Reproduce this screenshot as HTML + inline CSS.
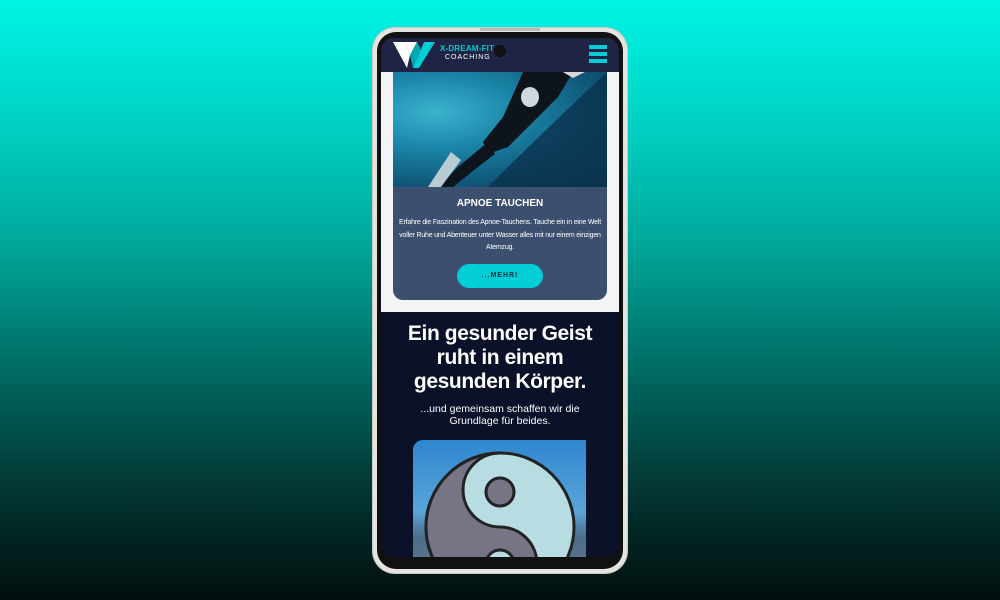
<!DOCTYPE html>
<html><head><meta charset="utf-8"><style>
*{margin:0;padding:0;box-sizing:border-box}
body{width:1000px;height:600px;overflow:hidden;background:linear-gradient(180deg,#00f4e6 0%,#00d6c8 18%,#00a99c 40%,#006a62 62%,#033a36 80%,#010e0d 100%);font-family:"Liberation Sans",sans-serif;position:relative}
.abs{position:absolute}
.frame{left:373px;top:28px;width:254px;height:545px;border-radius:22px;background:#e4e4e0;box-shadow:0 0 0 1px #c9c9c4}
.bezel{left:377px;top:32px;width:246px;height:537px;border-radius:19px;background:#111}
.screen{left:381px;top:38px;width:238px;height:519px;border-radius:12px;overflow:hidden;background:#0b1129}
.hdr{left:0;top:0;width:238px;height:34px;background:#1f2444}
.white{left:0;top:34px;width:238px;height:240px;background:#f3f4f6}
.img{left:12px;top:34px;width:214px;height:115px;overflow:hidden;background:radial-gradient(ellipse at 20% 35%,#3bb3cf 0%,#1a84a6 35%,#0f5577 70%,#0b3a55 100%)}
.body{left:12px;top:149px;width:214px;height:113px;background:#3c4f6e;border-radius:0 0 10px 10px;color:#fff;text-align:center}
.btn{left:64px;top:77px;width:86px;height:24px;border-radius:12px;background:#00cdd4;color:#1f2a44;font-size:7px;font-weight:bold;letter-spacing:1px;line-height:24px}
h1{font-size:21px;line-height:24px;color:#fff;text-align:center;font-weight:bold;letter-spacing:-0.4px}
</style></head><body>
<div class="abs frame"></div>
<div class="abs" style="left:480px;top:28px;width:60px;height:3px;background:#bbb"></div>
<div class="abs bezel"></div>
<div class="abs screen">
 <div class="abs hdr">
  <svg class="abs" style="left:12px;top:3px" width="44" height="28" viewBox="0 0 44 28">
   <polygon points="0,1 12,1 17,14 14,27" fill="#fff"/>
   <polygon points="12,1 24,1 17,14" fill="#fff"/>
   <polygon points="20,27 31,1 42,1 26,27" fill="#00cdd4"/>
   <polygon points="17,14 24,1 28,9 20,27" fill="#00a9b0"/>
  </svg>
  <div class="abs" style="left:59px;top:6px;font-size:8px;font-weight:bold;color:#00cdd4;letter-spacing:0.2px">X-DREAM-FIT</div>
  <div class="abs" style="left:64px;top:16px;font-size:7px;color:#fff;letter-spacing:1px">COACHING</div>
  <div class="abs" style="left:113px;top:7px;width:12px;height:12px;border-radius:6px;background:#111"></div>
  <div class="abs" style="left:208px;top:7px;width:18px;height:4px;background:#00cdd4"></div>
  <div class="abs" style="left:208px;top:14px;width:18px;height:4px;background:#00cdd4"></div>
  <div class="abs" style="left:208px;top:21px;width:18px;height:4px;background:#00cdd4"></div>
 </div>
 <div class="abs white"></div>
 <div class="abs img">
  <svg width="214" height="115" viewBox="0 0 214 115">
   <path d="M214 0 L214 115 L95 115 Q150 60 214 0Z" fill="#0b2f4a" opacity="0.75"/>
   <path d="M130 0 L180 0 L165 25 L140 50 L115 75 L95 82 L90 70 L110 45 Z" fill="#0e141c"/>
   <ellipse cx="137" cy="25" rx="9" ry="10" fill="#cfd8dc"/>
   <path d="M95 70 L65 95 L45 115 L60 115 L85 95 L102 82Z" fill="#0e141c"/>
   <path d="M58 80 L35 115 L48 115 L68 88Z" fill="#b8ccd4"/>
   <path d="M170 0 L192 0 L180 6Z" fill="#d8d8d8"/>
  </svg>
 </div>
 <div class="abs body">
  <div style="margin-top:11px;font-size:10px;font-weight:bold">APNOE TAUCHEN</div>
  <div style="margin-top:8px;font-size:7px;line-height:12.5px;padding:0 4px;letter-spacing:-0.2px">Erfahre die Faszination des Apnoe-Tauchens. Tauche ein in eine Welt voller Ruhe und Abenteuer unter Wasser alles mit nur einem einzigen Atemzug.</div>
  <div class="abs btn">...MEHR!</div>
 </div>
 <div class="abs" style="left:0;top:284px;width:238px"><h1>Ein gesunder Geist<br>ruht in einem<br>gesunden Körper.</h1></div>
 <div class="abs" style="left:0;top:365px;width:238px;text-align:center;color:#fff;font-size:10.5px;line-height:12px">...und gemeinsam schaffen wir die<br>Grundlage für beides.</div>
 <div class="abs" style="left:32px;top:402px;width:173px;height:130px;border-radius:10px 0 0 0;overflow:hidden;background:linear-gradient(180deg,#2f86cf 0%,#5aa5d8 55%,#4d6d88 75%,#5a7690 100%)">
  <svg width="173" height="130" viewBox="0 0 173 130">
   <circle cx="87" cy="87" r="74" fill="#b7dce2" stroke="#222" stroke-width="3"/>
   <path d="M87 13 A74 74 0 0 0 87 161 A37 37 0 0 0 87 87 A37 37 0 0 1 87 13Z" fill="#767585" stroke="#222" stroke-width="3"/>
   <circle cx="87" cy="52" r="14" fill="#767585" stroke="#222" stroke-width="3"/>
   <circle cx="87" cy="124" r="14" fill="#b7dce2" stroke="#222" stroke-width="3"/>
  </svg>
 </div>
</div>
</body></html>
